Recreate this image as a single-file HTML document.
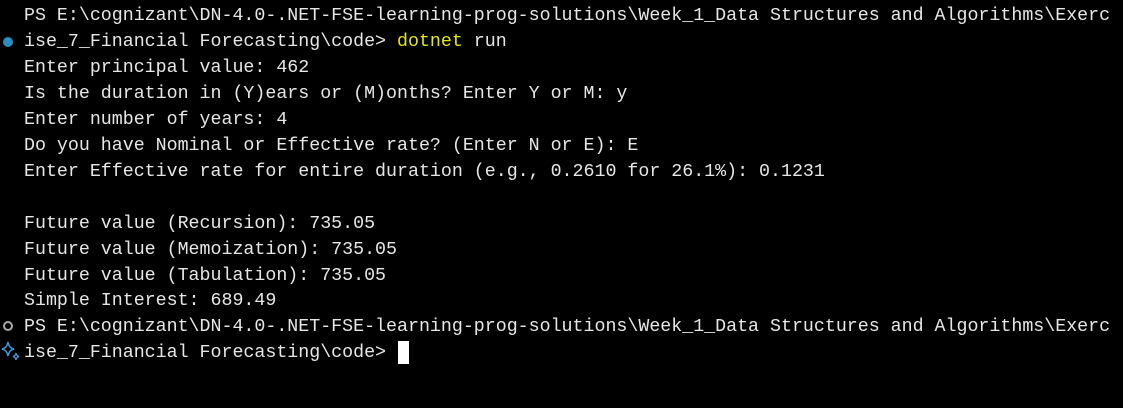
<!DOCTYPE html>
<html><head><meta charset="utf-8"><style>
html,body{margin:0;padding:0;background:#000;width:1123px;height:408px;overflow:hidden}
pre{margin:0;position:absolute;left:24px;top:4px;font-family:"Liberation Mono",monospace;font-size:18.3px;line-height:25.95px;color:#e6e6e6;white-space:pre}
.y{color:#e5e510}
.dot{position:absolute;left:3px;width:10px;height:10px;border-radius:50%}
.cur{position:absolute;left:398px;top:341px;width:11px;height:23px;background:#fff}
</style></head><body>
<div class="dot" style="top:37px;background:#2a8fc0"></div>
<div class="dot" style="top:321px;border:2px solid #aaa;width:6px;height:6px"></div>
<svg style="position:absolute;left:1px;top:341px" width="20" height="22" viewBox="0 0 20 22"><path d="M7 1 Q8 7 13 8 Q8 9 7 15 Q6 9 1 8 Q6 7 7 1Z" fill="none" stroke="#3a9ad9" stroke-width="1.5"/><path d="M15 12 Q15.5 15 18 15.5 Q15.5 16 15 19 Q14.5 16 12 15.5 Q14.5 15 15 12Z" fill="none" stroke="#3a9ad9" stroke-width="1.3"/></svg>
<pre>PS E:\cognizant\DN-4.0-.NET-FSE-learning-prog-solutions\Week_1_Data Structures and Algorithms\Exerc
ise_7_Financial Forecasting\code&gt; <span class="y">dotnet</span> run
Enter principal value: 462
Is the duration in (Y)ears or (M)onths? Enter Y or M: y
Enter number of years: 4
Do you have Nominal or Effective rate? (Enter N or E): E
Enter Effective rate for entire duration (e.g., 0.2610 for 26.1%): 0.1231

Future value (Recursion): 735.05
Future value (Memoization): 735.05
Future value (Tabulation): 735.05
Simple Interest: 689.49
PS E:\cognizant\DN-4.0-.NET-FSE-learning-prog-solutions\Week_1_Data Structures and Algorithms\Exerc
ise_7_Financial Forecasting\code&gt; </pre>
<div class="cur"></div>
</body></html>
